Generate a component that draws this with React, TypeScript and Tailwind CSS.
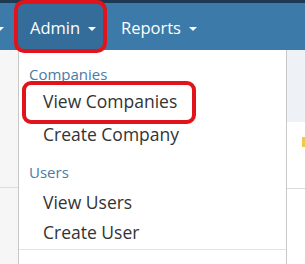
import React from 'react';

const Caret = () => (
  <span className="ml-[8px] inline-block h-0 w-0 border-x-[4px] border-t-[4px] border-x-transparent border-t-white align-middle" />
);

const App = () => {
  return (
    <div className="relative h-[264px] w-[305px] overflow-hidden bg-white font-['Open_Sans',sans-serif]">
      {/* top strip */}
      <div className="h-[3px] bg-[#1d3a52]" />

      {/* nav bar */}
      <nav className="flex h-[47px] items-stretch bg-[#3c7aaa] text-[16.5px] text-white">
        <div className="flex w-[15px] items-center justify-start pt-[4px]">
          <span className="-ml-[4px] inline-block h-0 w-0 border-x-[4px] border-t-[4px] border-x-transparent border-t-white" />
        </div>
        <div className="flex w-[90px] items-center bg-[#346d99] pl-[15px] pt-[4px]">
          <span>Admin</span>
          <Caret />
        </div>
        <div className="flex items-center pl-[16px] pt-[4px]">
          <span>Reports</span>
          <Caret />
        </div>
      </nav>

      {/* page behind the menu */}
      <div className="flex h-[214px]">
        <div className="flex w-[18px] flex-col bg-[#f6f6f6]">
          <div className="h-[137px]" />
          <div className="h-px bg-[#dcdcdc]" />
        </div>
        <div className="flex-1" />
        <div className="flex w-[18px] flex-col">
          <div className="h-[72px] bg-[#eef2f6]" />
          <div className="flex h-[66px] justify-end pt-[15px]">
            <div className="h-[10px] w-[3px] bg-[#f0c850]" />
          </div>
          <div className="h-px bg-[#dcdcdc]" />
        </div>
      </div>

      {/* dropdown menu */}
      <div className="absolute left-[18px] top-[50px] h-[214px] w-[269px] border-x border-[#c8c8c8] bg-white pt-[14px] text-[17.5px] text-[#333]">
        <div className="h-[20px] pl-[10px] text-[15px] leading-[20px] text-[#4b7aa6]">Companies</div>
        <div className="mt-[1px] h-[33px] pl-[24px] leading-[33px]">View Companies</div>
        <div className="h-[33px] pl-[24px] leading-[33px]">Create Company</div>
        <div className="mt-[11px] h-[20px] pl-[10px] text-[15px] leading-[20px] text-[#4b7aa6]">Users</div>
        <div className="mt-[5px] h-[30px] pl-[24px] leading-[30px]">View Users</div>
        <div className="h-[30px] pl-[24px] leading-[30px]">Create User</div>
        <div className="mt-[2px] h-px bg-[#e3e3e3]" />
      </div>

      {/* annotation boxes */}
      <div className="absolute left-[14px] top-0 h-[53px] w-[93px] rounded-[10px] border-[4px] border-[#e2141b]" />
      <div className="absolute left-[22px] top-[81px] h-[43px] w-[174px] rounded-[9px] border-[4px] border-[#e2141b]" />
    </div>
  );
};

export default App;
